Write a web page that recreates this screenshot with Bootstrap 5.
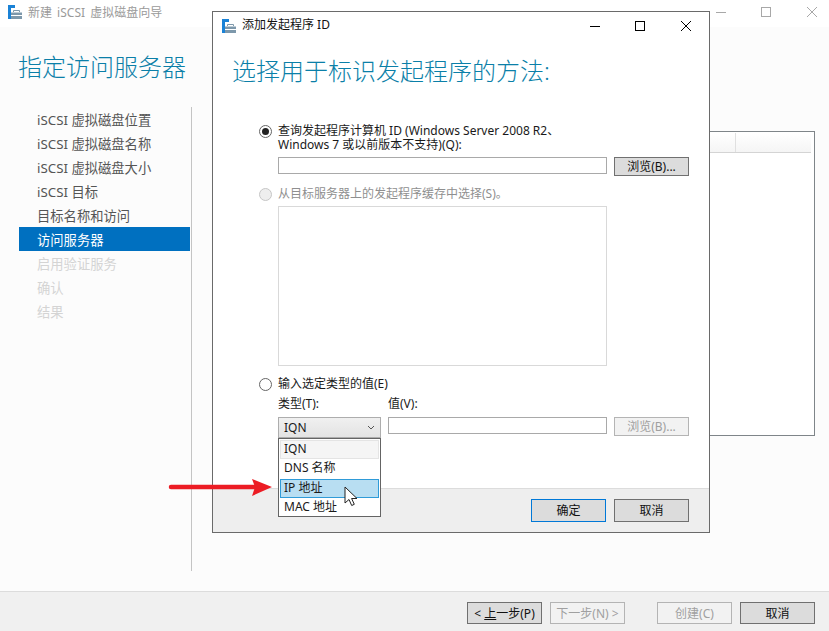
<!DOCTYPE html>
<html lang="zh"><head><meta charset="utf-8"><title>向导</title>
<link rel="stylesheet" href="https://cdn.jsdelivr.net/npm/bootstrap@5.3.0/dist/css/bootstrap.min.css">
<style>
html,body{height:631px;overflow:hidden}
body{font-family:"Noto Sans","Noto Sans CJK SC",sans-serif;font-size:12px;line-height:14px;color:#1a1a1a;background:#fff;position:relative}
.wiz{width:829px;height:631px}
.wiz-title{height:27px;padding:5px 0 0 8px;color:#9a9a9a;gap:5px;word-spacing:2px}
.wiz-title span{margin-top:1px}
.wiz-ctrl{position:absolute;top:0;left:0}
.wiz-main{background:#fcfcfc;height:564px}
.side{width:192px;padding:25px 0 0 19px}
.side-h{font-size:24px;line-height:30px;color:#0b7fa8;font-weight:300;margin-bottom:25px;white-space:nowrap;margin-left:-1px}
.side-list{width:173px;height:464px;border-right:1px solid #c4c4c4}
.side-item{height:24px;line-height:26px;padding-left:18px;font-size:13.3px;color:#555;width:171px;white-space:nowrap}
.side-item.sel{background:#0070c0;color:#fff}
.side-item.off{color:#d4d4d4}
.bgtable{position:absolute;left:650px;top:131px;width:165px;height:305px;border:1px solid #7f8589;border-left:0;background:#fff;padding-top:1px}
.bgtable-h{height:20px;width:161px;border-bottom:1px solid #d4d4d4;background:linear-gradient(#fff,#f5f5f5)}
.bgtable-c{width:86px;height:100%;border-right:1px solid #e0e0e0}
.wiz-foot{height:40px;background:#f0f0f0;border-top:1px solid #dcdcdc;padding:10px 14px 0 467px}
.wbtn{flex:none;width:75px;height:22px;border:1px solid #707070;background:#dcdcdc;font-size:12px;line-height:19px;color:#111;padding:0;text-align:center;border-radius:0;font-family:inherit;display:block}
.wbtn.dis{border-color:#b4b4b4;background:#f2f2f2;color:#a0a0a0}
.wbtn.def{border-color:#0078d7}
.wbtn.sm{height:19px;line-height:16px}
.wbtn.tall{height:23px}
.ml7{margin-left:8px}
.ml33{margin-left:32px}
.dlg{position:absolute;left:212px;top:11px;width:498px;height:522px;border:1px solid #6a6a6a;background:#fff}
.dlg-title{height:28px;padding:7px 0 0 9px;gap:5px;color:#111}
.dlg-title span{margin-top:-1px}
.dlg-h{font-size:24px;line-height:32px;color:#0b7fa8;font-weight:300;padding:15px 0 0 19px;white-space:nowrap;height:57px}
.dlg-body{height:392px;padding:27px 20px 0 46px}
.rd{width:13px;height:13px;border-radius:50%;border:1px solid #666;background:#fff;flex:none;margin-top:1px;position:relative}
.rd.on::after{content:"";position:absolute;left:2px;top:2px;width:7px;height:7px;border-radius:50%;background:#222}
.rd.off{border-color:#c6c6c6;background:#eee}
.rtext{margin-left:6px}
.mut{color:#8f8f8f}
.tb{height:17px;border:1px solid #a9a9a9;background:#fff;flex:none}
.wide{width:329px}
.vw{width:219px}
.fld{gap:7px;margin-left:19px}
.m5{margin-top:5px}
.m6{margin-top:6px}
.m11{margin-top:11px}
.list-off{height:160px;width:329px;border:1px solid #d9d9d9;margin:5px 0 0 19px}
.type-col{width:103px}
.cmb{flex:none;width:103px;height:21px;border:1px solid #adadad;background:linear-gradient(#f0f0f0,#e3e3e3);padding:2px 5px;line-height:16px;position:relative}
.cmb svg{position:absolute;right:5px;top:7px}
.dd{position:absolute;left:65px;top:426px;width:103px;height:79px;border:1px solid #646464;background:#fff;z-index:3;padding:1px}
.dd-i{height:19.25px;line-height:16px;padding-left:3px;border:1px solid transparent}
.dd-i.a{background:#f5f5f5;border-color:#e4e4e4}
.dd-i.h{background:#b8def2;border-color:#2f9bd8}
.dlg-foot{position:absolute;left:0;right:0;bottom:0;height:44px;background:#eee;border-top:1px solid #dcdcdc;padding:10px 20px 0 318px}
.arrow{position:absolute;left:168px;top:478px;z-index:5}
.cursor{position:absolute;left:344px;top:486px;z-index:6}
u{text-underline-offset:1px}
</style></head><body>
<div class="wiz d-flex flex-column">
 <div class="wiz-title d-flex align-items-start">
  <svg width="15" height="15" viewBox="0 0 15 15"><rect x="0" y="0" width="7" height="3" fill="#1a82d6"/><rect x="0" y="3" width="3" height="11" fill="#1a82d6"/><path d="M3 7.500h11V14H3z" fill="#7d98ab"/><path d="M5.500 7V5.500h6V7" fill="none" stroke="#7d98ab"/><rect x="3" y="10" width="11" height="1" fill="#fff"/></svg>
  <span>新建 iSCSI 虚拟磁盘向导</span>
 </div>
 <div class="wiz-main d-flex">
  <div class="side">
   <div class="side-h">指定访问服务器</div>
   <div class="side-list">
    <div class="side-item">iSCSI 虚拟磁盘位置</div>
    <div class="side-item">iSCSI 虚拟磁盘名称</div>
    <div class="side-item">iSCSI 虚拟磁盘大小</div>
    <div class="side-item">iSCSI 目标</div>
    <div class="side-item">目标名称和访问</div>
    <div class="side-item sel">访问服务器</div>
    <div class="side-item off">启用验证服务</div>
    <div class="side-item off">确认</div>
    <div class="side-item off">结果</div>
   </div>
  </div>
 </div>
 <div class="wiz-foot d-flex">
  <button class="wbtn">&lt; <u>上</u>一步(P)</button>
  <button class="wbtn dis ms-2">下一步(N) &gt;</button>
  <button class="wbtn dis ml33">创建(C)</button>
  <button class="wbtn ml7">取消</button>
 </div>
</div>
<svg class="wiz-ctrl" width="829" height="27"><path d="M716 12.500h10" stroke="#a8a8a8"/><rect x="761.500" y="7.500" width="9" height="9" fill="none" stroke="#a8a8a8"/><path d="M807 7l10 10M817 7l-10 10" stroke="#a8a8a8" fill="none"/></svg>
<div class="bgtable"><div class="bgtable-h"><div class="bgtable-c"></div></div></div>
<div class="dlg">
 <div class="dlg-title d-flex align-items-start">
  <svg width="15" height="15" viewBox="0 0 15 15"><rect x="0" y="0" width="7" height="3" fill="#1a82d6"/><rect x="0" y="3" width="3" height="11" fill="#1a82d6"/><path d="M3 7.500h11V14H3z" fill="#7d98ab"/><path d="M5.500 7V5.500h6V7" fill="none" stroke="#7d98ab"/><rect x="3" y="10" width="11" height="1" fill="#fff"/></svg>
  <span>添加发起程序 ID</span>
 </div>
 <svg class="wiz-ctrl" width="498" height="28"><path d="M377 14.500h10" stroke="#000"/><rect x="422.500" y="9.500" width="9" height="9" fill="none" stroke="#000"/><path d="M468 9l10 10M478 9l-10 10" stroke="#000" fill="none"/></svg>
 <div class="dlg-h">选择用于标识发起程序的方法:</div>
 <div class="dlg-body">
  <div class="d-flex"><span class="rd on"></span><div class="rtext">查询发起程序计算机 ID (Windows Server 2008 R2、<br>Windows 7 或以前版本不支持)(Q):</div></div>
  <div class="d-flex align-items-start fld m5"><div class="tb wide"></div><button class="wbtn sm">浏览(B)...</button></div>
  <div class="d-flex m11"><span class="rd off"></span><div class="rtext mut">从目标服务器上的发起程序缓存中选择(S)。</div></div>
  <div class="list-off"></div>
  <div class="d-flex m11"><span class="rd"></span><div class="rtext">输入选定类型的值(E)</div></div>
  <div class="d-flex fld m6"><div class="type-col">类型(T):</div><div>值(V):</div></div>
  <div class="d-flex align-items-start fld m6"><div class="cmb">IQN<svg width="8" height="5" viewBox="0 0 8 5"><path d="M1 1l3 3 3-3" fill="none" stroke="#555"/></svg></div><div class="tb vw"></div><button class="wbtn sm dis">浏览(B)...</button></div>
 </div>
 <div class="dlg-foot d-flex"><button class="wbtn tall def">确定</button><button class="wbtn tall ml7">取消</button></div>
 <div class="dd">
  <div class="dd-i a">IQN</div><div class="dd-i">DNS 名称</div><div class="dd-i h">IP 地址</div><div class="dd-i">MAC 地址</div>
 </div>
</div>
<svg class="arrow" width="105" height="20" viewBox="0 0 105 20"><path d="M3 9h84" stroke="#ec1c24" stroke-width="4.500" stroke-linecap="round"/><path d="M84 1l20 8-20 9 3-9z" fill="#ec1c24"/></svg>
<svg class="cursor" width="14" height="22" viewBox="0 0 14 22"><path d="M1 1v16l4-3.500 2.700 6 2.600-1.200-2.700-5.800H13z" fill="#fff" stroke="#222"/></svg>
</body></html>
